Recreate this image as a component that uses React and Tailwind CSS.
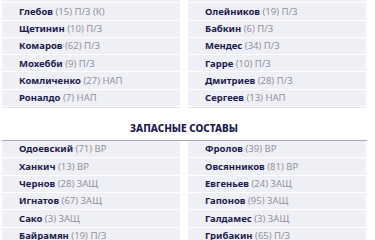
const starters = [
  [['Глебов', '(15) П/З (К)'], ['Олейников', '(19) П/З']],
  [['Щетинин', '(10) П/З'], ['Бабкин', '(6) П/З']],
  [['Комаров', '(62) П/З'], ['Мендес', '(34) П/З']],
  [['Мохебби', '(9) П/З'], ['Гарре', '(10) П/З']],
  [['Комличенко', '(27) НАП'], ['Дмитриев', '(28) П/З']],
  [['Роналдо', '(7) НАП'], ['Сергеев', '(13) НАП']],
]

const subs = [
  [['Одоевский', '(71) ВР'], ['Фролов', '(39) ВР']],
  [['Ханкич', '(13) ВР'], ['Овсянников', '(81) ВР']],
  [['Чернов', '(28) ЗАЩ'], ['Евгеньев', '(24) ЗАЩ']],
  [['Игнатов', '(67) ЗАЩ'], ['Гапонов', '(95) ЗАЩ']],
  [['Сако', '(3) ЗАЩ'], ['Галдамес', '(3) ЗАЩ']],
  [['Байрамян', '(19) П/З'], ['Грибакин', '(65) П/З']],
]

function Player({ p }) {
  return (
    <div className="h-[17.3px] flex items-center pl-[17px] bg-[#efeff6] border-b border-white shadow-[0_1px_0_#e2e2ea] whitespace-nowrap">
      {p && (
        <span className="text-[9.5px] leading-none">
          <span className="font-bold text-[#1c1b4d]">{p[0]}</span>{' '}
          <span className="text-[#92929d]">{p[1]}</span>
        </span>
      )}
    </div>
  )
}

function Rows({ rows }) {
  return (
    <div className="grid grid-cols-[178px_178px] gap-x-[8px]">
      {rows.map((r, i) => (
        <div key={i} className="contents">
          <Player p={r[0]} />
          <Player p={r[1]} />
        </div>
      ))}
    </div>
  )
}

export default function App() {
  return (
    <div className="w-[375px] h-[240px] overflow-hidden bg-white pl-[2px]" style={{ fontFamily: '"Noto Sans", sans-serif' }}>
      <div className="-mt-[14px]">
        <Rows rows={[[null, null], ...starters]} />
      </div>
      <div className="w-[364px] pt-[16px] pb-[7px] text-center text-[10px] font-extrabold text-[#1c1b4d] leading-none">
        ЗАПАСНЫЕ СОСТАВЫ
      </div>
      <div className="w-[365px] border-t border-[#a9a9b0]">
        <Rows rows={subs} />
      </div>
    </div>
  )
}
